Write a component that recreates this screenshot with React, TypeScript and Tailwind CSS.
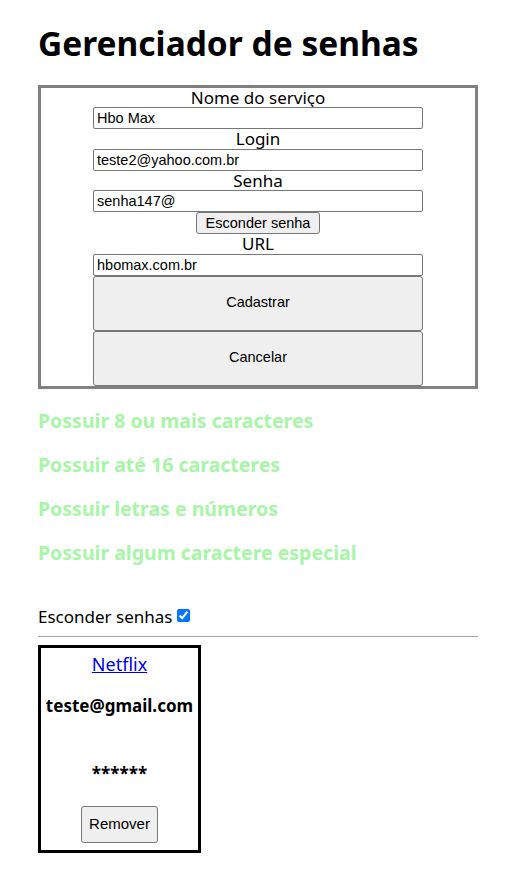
import React, { useState } from 'react';

const ui = { fontFamily: '"Noto Sans", "Open Sans", sans-serif' };
const native = { fontFamily: '"Liberation Sans", Arial, sans-serif' };

const inputCls =
  'w-[330px] h-[22px] border border-[#767676] rounded-[2px] px-[3px] text-[14.5px] text-black bg-white outline-none';
const btnCls = 'bg-[#efefef] border border-[#767676] rounded-[3px] text-[14.5px] text-black';

const rules = [
  'Possuir 8 ou mais caracteres',
  'Possuir até 16 caracteres',
  'Possuir letras e números',
  'Possuir algum caractere especial',
];

function Field({ label, value }: { label: string; value: string }) {
  return (
    <>
      <label className="text-[17px] leading-[19.4px] h-[19.4px]">{label}</label>
      <input className={inputCls} style={native} defaultValue={value} />
    </>
  );
}

export default function App() {
  const [hide, setHide] = useState(true);
  return (
    <div className="px-[38px] pt-[21px] pb-6 text-black bg-white min-h-screen" style={ui}>
      <h1 className="text-[33.5px] font-bold leading-[44px] mb-[20px]">Gerenciador de senhas</h1>

      <form className="w-[440px] border-[3px] border-[#808080] flex flex-col items-center">
        <Field label="Nome do serviço" value="Hbo Max" />
        <Field label="Login" value="teste2@yahoo.com.br" />
        <Field label="Senha" value="senha147@" />
        <button type="button" className={`${btnCls} h-[22px] px-[9px]`} style={native}>
          Esconder senha
        </button>
        <Field label="URL" value="hbomax.com.br" />
        <button type="button" className={`${btnCls} w-[330px] h-[55px]`} style={native}>
          Cadastrar
        </button>
        <button type="button" className={`${btnCls} w-[330px] h-[55px]`} style={native}>
          Cancelar
        </button>
      </form>

      <div className="mt-[20px] flex flex-col gap-[20px]">
        {rules.map((r) => (
          <h3 key={r} className="text-[19.5px] font-bold leading-[24px] text-[#a8f5a8]">
            {r}
          </h3>
        ))}
      </div>

      <div className="mt-[40px] flex items-center gap-[5px] text-[17px] leading-[24px]">
        <span>Esconder senhas</span>
        <input
          type="checkbox"
          checked={hide}
          onChange={() => setHide(!hide)}
          className="w-[13px] h-[13px] accent-[#0075ff] -mt-[2px]"
        />
      </div>

      <hr className="mt-[7px] w-[440px] border-t border-[#a0a0a0]" />

      <div className="mt-[8px] w-[163px] h-[208px] border-[3px] border-black flex flex-col items-center">
        <a href="#" className="mt-[4px] text-[18px] leading-[24px] text-[#0000ee] underline">
          Netflix
        </a>
        <p className="mt-[18px] text-[17px] font-bold leading-[24px]">teste@gmail.com</p>
        <p className="mt-[44px] text-[17px] font-bold leading-[24px]">
          {hide ? '******' : 'senha123'}
        </p>
        <button type="button" className={`${btnCls} mt-[20px] w-[77px] h-[37px] text-[15px]`} style={native}>
          Remover
        </button>
      </div>
    </div>
  );
}
